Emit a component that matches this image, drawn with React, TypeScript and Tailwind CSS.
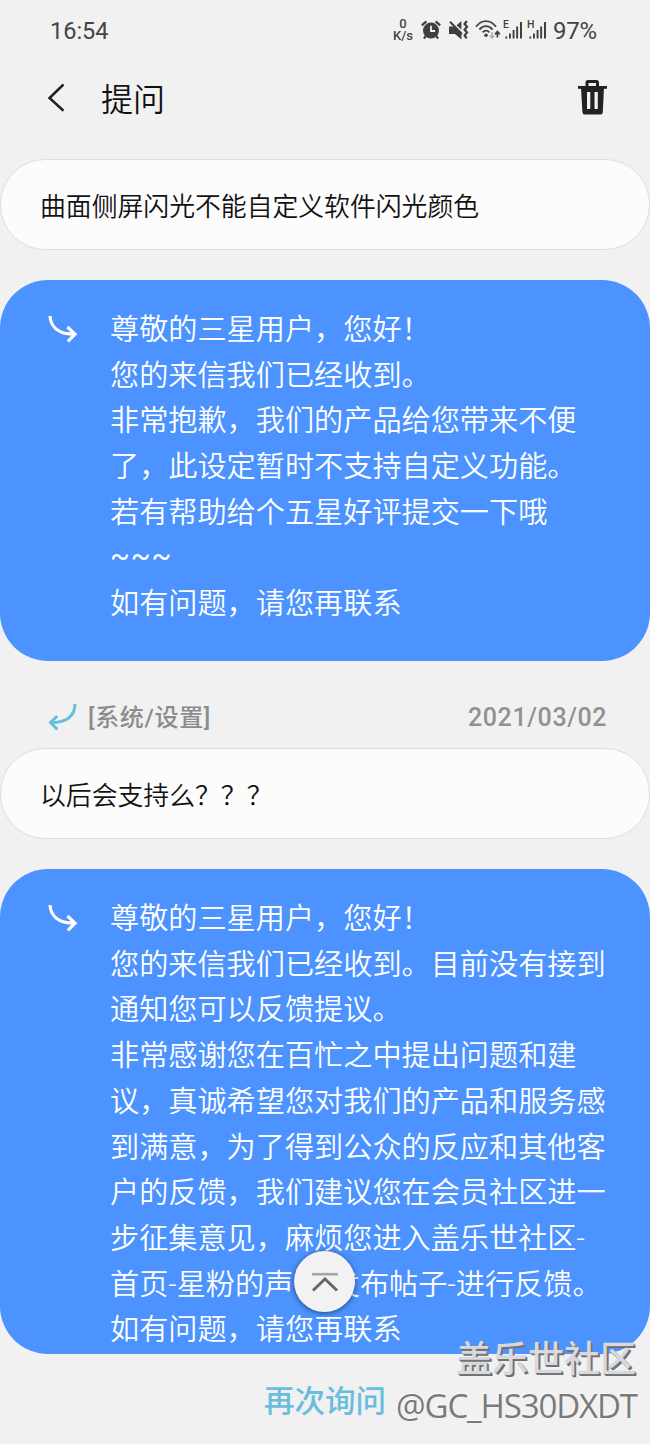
import React from "react";

const LATIN_CJK = "font-['Roboto','Noto_Sans_CJK_SC',sans-serif]";

function AlarmIcon() {
  return (
    <svg className="h-[20px] w-[20px]" viewBox="0 0 20 20" fill="none">
      <circle cx="10" cy="10.6" r="8" fill="#3f3f3f" />
      <path d="M.8 5.4 5.4 1.4M19.2 5.4 14.6 1.4" stroke="#3f3f3f" strokeWidth="2.2" />
      <path d="M4.6 16 3 18.6M15.4 16l1.6 2.6" stroke="#3f3f3f" strokeWidth="2.2" />
      <path d="M10 5.8V11H14" stroke="#f2f2f2" strokeWidth="1.8" />
    </svg>
  );
}

function MuteIcon() {
  return (
    <svg className="h-[20px] w-[20px]" viewBox="0 0 20 20" fill="none">
      <path d="M0 6.5H5L12.4 13.5V19.5L6 14H0Z" fill="#3f3f3f" />
      <path d="M7.6 5.2 12.4 1V9.6Z" fill="#3f3f3f" />
      <path d="M1 1.8 13 14" stroke="#3f3f3f" strokeWidth="2" />
      <path d="M17.8 1 15.6 4l2.4 2.8-2.4 2.9 2.4 2.9-2.4 2.8 2 3" stroke="#3f3f3f" strokeWidth="2.2" />
    </svg>
  );
}

function WifiIcon() {
  return (
    <svg className="h-[20px] w-[26px]" viewBox="0 0 26 20" fill="none">
      <path d="M1 6.8C6.6-.8 15.4-.8 21 6.8M4.4 9.6c3.8-4.6 9.4-4.6 13.2 0M7.6 12.4c2-2.4 4.8-2.4 6.8 0" stroke="#444" strokeWidth="1.8" />
      <circle cx="11" cy="15.2" r="1.8" fill="#444" />
      <path d="M17 12v6M14.7 15.4l2.3 2.5 2.3-2.5" stroke="#aaa" strokeWidth="1.5" />
      <path d="M22.4 17.5v-5M20 14.4l2.4-2.8 2.4 2.8" stroke="#3f3f3f" strokeWidth="1.7" />
    </svg>
  );
}

function Signal({ label }: { label: string }) {
  return (
    <div className="relative h-[20px] w-[20px]">
      <span className="absolute -top-[1px] -left-[1px] font-['Roboto',sans-serif] text-[10.5px] leading-[12px] font-medium text-[#3f3f3f]">
        {label}
      </span>
      <svg className="h-[20px] w-[20px]" viewBox="0 0 20 20" fill="#3f3f3f">
        <path d="M1.4 16.4h1.8v2.1H1.4zM5 13.5h1.9v5H5zM8.6 10h1.9v8.5H8.6zM12.2 6.5h1.9v12h-1.9zM16 2h2v16.5h-2z" />
      </svg>
    </div>
  );
}

function StatusBar() {
  return (
    <div className="flex h-[60px] items-center pl-[50px] text-[#444]">
      <span className="w-[342px] pt-[3px] font-['Roboto',sans-serif] text-[23.5px] leading-none">16:54</span>
      <div className="flex w-[22px] flex-col items-center font-['Roboto',sans-serif] text-[13px] leading-none font-medium">
        <span className="h-[12px] leading-[12px]">0</span>
        <span className="h-[12px] leading-[12px]">K/s</span>
      </div>
      <div className="ml-[7px] flex"><AlarmIcon /></div>
      <div className="ml-[8px] flex"><MuteIcon /></div>
      <div className="ml-[6px] flex"><WifiIcon /></div>
      <div className="ml-[3px] flex"><Signal label="E" /></div>
      <div className="ml-[4px] flex"><Signal label="H" /></div>
      <span className="ml-[5px] pt-[2px] font-['Roboto',sans-serif] text-[24px] leading-none tracking-[-0.3px]">97%</span>
    </div>
  );
}

function Header() {
  return (
    <header className="flex h-[99px] items-start pt-[10px] pl-[46px]">
      <svg className="mt-[12px] h-[32px] w-[20px]" viewBox="0 0 20 32" fill="none">
        <path d="M17.5 2.5 3.5 16l14 12.7" stroke="#222" strokeWidth="2.5" />
      </svg>
      <h1 className={`${LATIN_CJK} mt-[2px] ml-[35px] w-[475px] text-[32px] leading-[56px] font-[350] text-[#111]`}>提问</h1>
      <svg className="mt-[9px] h-[38px] w-[32px]" viewBox="0 0 32 38" fill="none">
        <path d="M11 9V3.5Q11 2.5 12 2.5H20.5Q21.5 2.5 21.5 3.5V9" stroke="#222" strokeWidth="3" />
        <path d="M2 8.4H31" stroke="#222" strokeWidth="2.8" />
        <path fillRule="evenodd" d="M5 8H28L26.8 33Q26.7 35.5 24.5 35.5H8.8Q6.6 35.5 6.4 33ZM11 13V30H14.3V13ZM18.5 13V30H21.8V13Z" fill="#222" />
      </svg>
    </header>
  );
}

function Question({ children }: { children: React.ReactNode }) {
  return (
    <div className={`${LATIN_CJK} flex h-[91px] items-center rounded-[45px] border border-[#dedede] bg-[#fcfcfc] pt-[5px] pl-[39px] text-[25.83px] font-[350] whitespace-nowrap text-[#111]`}>
      {children}
    </div>
  );
}

function Answer({ lines, height }: { lines: string[]; height: string }) {
  return (
    <section className={`${height} flex items-start rounded-[48px] bg-[#4c93ff] pt-[28px] pl-[47px] text-white`}>
      <svg className="mt-[6px] h-[32px] w-[32px]" viewBox="0 0 32 32" fill="none">
        <path d="M3 2C3.6 13 11.5 20 27 20.2M20.5 13l7.5 7.2L20.8 27.5" stroke="#fff" strokeWidth="3.2" />
      </svg>
      <div className={`${LATIN_CJK} ml-[31px] text-[29.17px] leading-[45.7px] font-[350] whitespace-nowrap`}>
        {lines.map((line) => (
          <p key={line} className={line === "~~~" ? "-mt-[3px] mb-[3px] font-normal tracking-[0.9px]" : ""}>
            {line}
          </p>
        ))}
      </div>
    </section>
  );
}

const FIRST = [
  "尊敬的三星用户，您好！",
  "您的来信我们已经收到。",
  "非常抱歉，我们的产品给您带来不便",
  "了，此设定暂时不支持自定义功能。",
  "若有帮助给个五星好评提交一下哦",
  "~~~",
  "如有问题，请您再联系",
];

const SECOND = [
  "尊敬的三星用户，您好！",
  "您的来信我们已经收到。目前没有接到",
  "通知您可以反馈提议。",
  "非常感谢您在百忙之中提出问题和建",
  "议，真诚希望您对我们的产品和服务感",
  "到满意，为了得到公众的反应和其他客",
  "户的反馈，我们建议您在会员社区进一",
  "步征集意见，麻烦您进入盖乐世社区-",
  "首页-星粉的声音-发布帖子-进行反馈。",
  "如有问题，请您再联系",
];

export default function App() {
  return (
    <main lang="zh-CN" className="relative h-[1444px] w-[650px] overflow-hidden bg-[#f1f1f1]">
      <StatusBar />
      <Header />
      <Question>曲面侧屏闪光不能自定义软件闪光颜色</Question>
      <div className="h-[30px]" />
      <Answer lines={FIRST} height="h-[381px]" />
      <div className="flex h-[87px] items-center pt-[24px] pl-[47px]">
        <svg className="h-[30px] w-[30px]" viewBox="0 0 30 30" fill="none">
          <path d="M28 2C27.8 13.5 20 20.5 4 20.8M10.2 14 3.5 20.6l6.8 6.8" stroke="#68bedb" strokeWidth="3" />
        </svg>
        <span className={`${LATIN_CJK} mt-[3px] ml-[11px] w-[380px] text-[24px] leading-[40px] font-medium tracking-[0.65px] text-[#8c8c8c]`}>
          [系统/设置]
        </span>
        <span className="mt-[3px] font-['Roboto',sans-serif] text-[25px] leading-[40px] font-medium tracking-[0.6px] text-[#919191]">
          2021/03/02
        </span>
      </div>
      <Question>以后会支持么？？？</Question>
      <div className="h-[30px]" />
      <Answer lines={SECOND} height="h-[485px]" />
      <div className="flex h-[90px] items-center pt-[5px] pl-[264px]">
        <button className={`${LATIN_CJK} text-[30.5px] leading-[48px] font-medium text-[#68bedb]`}>再次询问</button>
      </div>
      <button className="absolute top-[1251px] left-[294px] flex h-[61px] w-[61px] items-center justify-center rounded-full bg-[#f2f2f2] shadow-[0_1px_4px_1px_rgba(20,50,110,0.6)]">
        <svg className="h-[22px] w-[28px]" viewBox="0 0 28 22" fill="none">
          <path d="M1 3.2H27" stroke="#a6a6a6" strokeWidth="2.6" />
          <path d="M2 19.5 14 8l12 11.5" stroke="#666" strokeWidth="3" />
        </svg>
      </button>
      <div className="absolute top-[1334px] left-[396px] whitespace-nowrap">
        <div className="ml-[60px] font-['Noto_Sans_CJK_SC',sans-serif] text-[36px] leading-[44px] font-medium text-[#d8d9de] [text-shadow:1px_1px_0_#777,2px_2px_0_#707070]">
          盖乐世社区
        </div>
        <div className="mt-[4px] font-['Open_Sans',sans-serif] text-[33px] leading-[48px] tracking-[-1.1px] text-[#7a7a7a] [text-shadow:-1px_-1px_0_#fafafa]">
          @GC_HS30DXDT
        </div>
      </div>
    </main>
  );
}
